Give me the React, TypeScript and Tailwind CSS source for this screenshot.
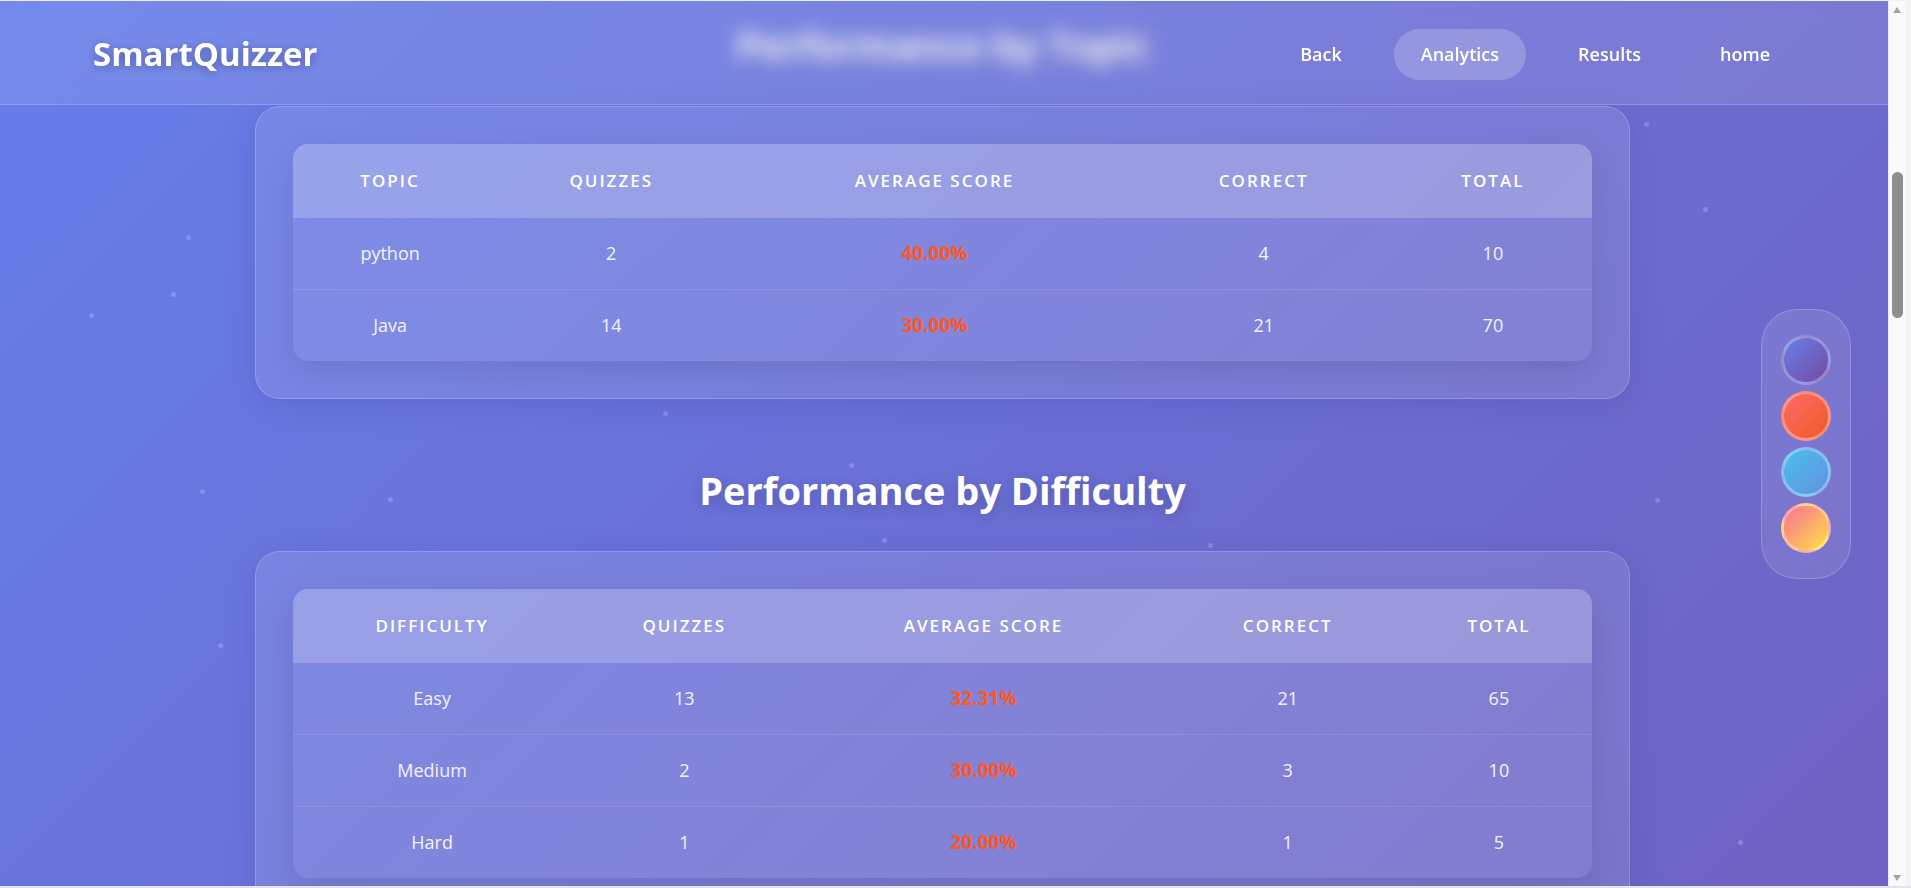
import React from "react";

type Row = {
  label: string;
  quizzes: number;
  score: string;
  correct: number;
  total: number;
};

const topicRows: Row[] = [
  { label: "python", quizzes: 2, score: "40.00%", correct: 4, total: 10 },
  { label: "Java", quizzes: 14, score: "30.00%", correct: 21, total: 70 },
];

const difficultyRows: Row[] = [
  { label: "Easy", quizzes: 13, score: "32.31%", correct: 21, total: 65 },
  { label: "Medium", quizzes: 2, score: "30.00%", correct: 3, total: 10 },
  { label: "Hard", quizzes: 1, score: "20.00%", correct: 1, total: 5 },
];

// decorative floating particles
const dots = [
  [186, 234], [171, 291], [89, 312], [200, 488], [388, 496], [218, 642],
  [663, 410], [882, 537], [849, 462], [1208, 542], [1644, 121], [1703, 206],
  [1655, 497], [1738, 839],
];

function Section({
  title,
  first,
  rows,
  widths,
}: {
  title: string;
  first: string;
  rows: Row[];
  widths: number[];
}) {
  const heads = [first, "Quizzes", "Average Score", "Correct", "Total"];
  return (
    <div className="flex flex-col">
      <h2 className="text-center text-[38px] leading-[48px] font-bold text-white mb-[37px] [text-shadow:0_4px_15px_rgba(0,0,0,0.2)]">
        {title}
      </h2>
      <div className="rounded-[25px] border border-white/20 bg-white/10 p-[37px] shadow-[0_8px_32px_rgba(31,38,135,0.15)]">
        <div className="rounded-[15px] overflow-hidden bg-white/5 shadow-[0_10px_30px_rgba(0,0,0,0.1)]">
          <table className="w-full table-fixed border-collapse">
            <colgroup>
              {widths.map((w, i) => (
                <col key={i} style={{ width: w }} />
              ))}
            </colgroup>
            <thead>
              <tr className="h-[73px] bg-white/20 border-b border-white/20">
                {heads.map((h) => (
                  <th
                    key={h}
                    className="text-center text-[17px] font-semibold uppercase tracking-[2px] text-white"
                  >
                    {h}
                  </th>
                ))}
              </tr>
            </thead>
            <tbody>
              {rows.map((r, i) => (
                <tr
                  key={r.label}
                  className={
                    i < rows.length - 1
                      ? "h-[72px] border-b border-white/10"
                      : "h-[72px]"
                  }
                >
                  <td className="text-center text-[18px] text-white/90">{r.label}</td>
                  <td className="text-center text-[18px] text-white/90">{r.quizzes}</td>
                  <td className="text-center text-[19px] font-bold text-[#ff5722]">{r.score}</td>
                  <td className="text-center text-[18px] text-white/90">{r.correct}</td>
                  <td className="text-center text-[18px] text-white/90">{r.total}</td>
                </tr>
              ))}
            </tbody>
          </table>
        </div>
      </div>
    </div>
  );
}

export default function App() {
  const links = ["Back", "Analytics", "Results", "home"];
  return (
    <div className="h-[888px] w-[1911px] flex overflow-hidden border-t border-[#eef0fb] border-b-2 border-b-[#e4e4e8] bg-[#f3f3f3] [font-family:'Open_Sans','Noto_Sans',sans-serif]">
      {/* page */}
      <div className="relative w-[1888px] overflow-hidden bg-[linear-gradient(135deg,#667eea_0%,#6f62c2_100%)]">
        {dots.map(([x, y], i) => (
          <span
            key={i}
            className="absolute h-[5px] w-[5px] rounded-full bg-white/20"
            style={{ left: x, top: y }}
          />
        ))}

        <div className="relative flex flex-col gap-[67px] pt-[20px] pl-[255px] pr-[258px]">
          <Section
            title="Performance by Topic"
            first="Topic"
            rows={topicRows}
            widths={[194, 248, 398, 260, 198]}
          />
          <Section
            title="Performance by Difficulty"
            first="Difficulty"
            rows={difficultyRows}
            widths={[278, 226, 372, 236, 186]}
          />
        </div>

        {/* sticky header */}
        <header className="absolute left-0 right-0 top-0 h-[104px] flex items-center justify-between pl-[93px] pr-[91px] pt-[3px] bg-white/10 border-b border-white/20 backdrop-blur-[10px]">
          <div className="text-[33px] font-bold text-white [text-shadow:0_2px_10px_rgba(0,0,0,0.3)]">
            SmartQuizzer
          </div>
          <nav className="flex items-center gap-[25px]">
            {links.map((l) => (
              <a
                key={l}
                className={
                  l === "Analytics"
                    ? "rounded-full bg-white/20 px-[27px] py-3 text-[18px] leading-[27px] font-semibold text-white"
                    : "rounded-full px-[27px] py-3 text-[18px] leading-[27px] font-semibold text-white"
                }
              >
                {l}
              </a>
            ))}
          </nav>
        </header>

        {/* theme picker */}
        <div className="absolute right-[37px] top-1/2 -translate-y-1/2 flex flex-col gap-[6px] rounded-[36px] border border-white/20 bg-white/10 px-[19px] py-[25px] backdrop-blur-[10px]">
          <span className="h-[50px] w-[50px] rounded-full border-[3px] border-white/30 bg-[linear-gradient(135deg,#667eea,#764ba2)]" />
          <span className="h-[50px] w-[50px] rounded-full border-[3px] border-white/30 bg-[linear-gradient(135deg,#ff6b6b,#ee5a24)]" />
          <span className="h-[50px] w-[50px] rounded-full border-[3px] border-white/30 bg-[linear-gradient(135deg,#4cc0ec,#6190e0)]" />
          <span className="h-[50px] w-[50px] rounded-full border-[3px] border-white/30 bg-[linear-gradient(135deg,#fa709a,#fee140)]" />
        </div>
      </div>

      {/* scrollbar */}
      <div className="w-[17px] flex flex-col items-center bg-[#fafafa] border-l border-[#ececec]">
        <div className="h-[17px] flex items-center justify-center">
          <svg width="8" height="6" viewBox="0 0 8 6">
            <path d="M4 0 L8 6 L0 6 Z" fill="#a3a3a3" />
          </svg>
        </div>
        <div className="flex-1">
          <div className="mt-[154px] h-[146px] w-[11px] rounded-full bg-[#8f8f8f]" />
        </div>
        <div className="h-[17px] flex items-center justify-center">
          <svg width="8" height="6" viewBox="0 0 8 6">
            <path d="M0 0 L8 0 L4 6 Z" fill="#a3a3a3" />
          </svg>
        </div>
      </div>
    </div>
  );
}
